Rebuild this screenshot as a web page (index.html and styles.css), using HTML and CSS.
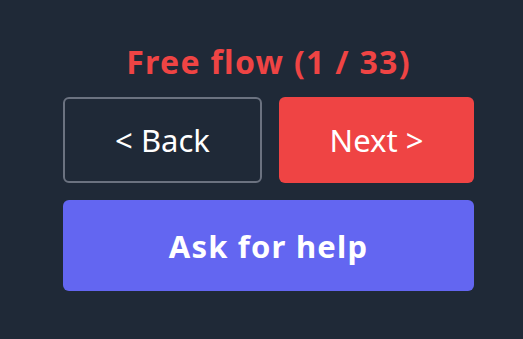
FILE: index.html
```html
<!DOCTYPE html>
<html>
<head>
<meta charset="utf-8">
<link rel="stylesheet" href="styles.css">
</head>
<body>
<div class="panel">
  <h1 class="title">Free flow (1 / 33)</h1>
  <div class="nav">
    <button class="btn btn-back">&lt; Back</button>
    <button class="btn btn-next">Next &gt;</button>
  </div>
  <button class="btn btn-help">Ask for help</button>
</div>
</body>
</html>
```
FILE: styles.css
```css
html, body {
  margin: 0;
  padding: 0;
  background: #1f2937;
  width: 523px;
  height: 339px;
  overflow: hidden;
}
.panel {
  margin-left: 63px;
  width: 411px;
  padding-top: 41px;
  display: flex;
  flex-direction: column;
  font-family: "Noto Sans", "Open Sans", sans-serif;
}
.title {
  margin: 0 0 14px 0;
  font-size: 32px;
  line-height: 42px;
  font-weight: 700;
  letter-spacing: 1.3px;
  color: #ef4444;
  text-align: center;
}
.nav {
  display: flex;
  gap: 17px;
  margin-bottom: 17px;
}
.btn {
  font-family: inherit;
  font-size: 31px;
  color: #ffffff;
  border-radius: 6px;
  cursor: pointer;
  padding: 0;
}
.btn-back, .btn-next {
  flex: 1;
  height: 86px;
}
.btn-back {
  background: transparent;
  border: 2px solid #6b7280;
}
.btn-next {
  background: #ef4444;
  border: none;
}
.btn-help {
  height: 91px;
  background: #6366f1;
  border: none;
  font-weight: 700;
  letter-spacing: 1.2px;
}
```
